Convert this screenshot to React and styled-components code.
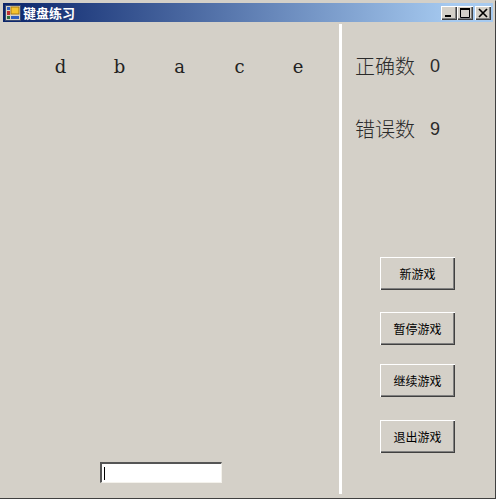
import React from "react";
import styled, { createGlobalStyle } from "styled-components";

const Global = createGlobalStyle`
  html, body { margin: 0; padding: 0; background: #d4d0c8; overflow: hidden; }
  #root { width: 496px; height: 499px; }
`;
const Window = styled.div`
  box-sizing: border-box; width: 496px; height: 499px; display: flex; flex-direction: column;
  background: #d4d0c8; padding: 3px 2px 2px 3px;
  border-right: 1px solid #404040; border-bottom: 1px solid #404040;
  border-top: 1px solid #d4d0c8;
  font-family: "Liberation Sans", "Noto Sans CJK SC", sans-serif;
`;
const TitleBar = styled.div`
  height: 19px; flex: none; display: flex; align-items: center; padding: 0 2px 0 2px;
  background: linear-gradient(to right, #0a246a, #a6caf0 92%); margin-top: -1px;
`;
const AppIcon = styled.svg`width: 16px; height: 16px; flex: none; margin-right: 2px;`;
const Title = styled.div`
  flex: 1; color: #fff; font-size: 13px; font-weight: 700; line-height: 18px;
  font-family: "Noto Sans CJK SC", sans-serif;
`;
const CapButton = styled.div`
  box-sizing: border-box; width: 16px; height: 14px; margin-left: ${p => p.$gap || 0}px;
  background: #d4d0c8; display: flex; align-items: center; justify-content: center;
  box-shadow: inset 1px 1px 0 #fff, inset -1px -1px 0 #404040, inset -2px -2px 0 #808080;
`;
const Glyph = styled.svg`width: 10px; height: 10px; display: block;`;
const Body = styled.div`flex: 1; display: flex; min-height: 0; padding-top: 2px;`;
const GameArea = styled.div`
  width: 336px; flex: none; display: flex; flex-direction: column; align-items: flex-start;
`;
const Letters = styled.div`
  display: grid; grid-template-columns: 59px 59px 61px 59px 58px; margin: 32px 0 0 28px;
`;
const Letter = styled.span`
  text-align: center; font: 18px/22px "DejaVu Serif", serif; color: #222;
`;
const InputBox = styled.div`
  box-sizing: border-box; width: 122px; height: 21px; margin: auto 0 13px 97px;
  background: #fff; padding: 3px 2px;
  border-top: 2px solid #555; border-left: 2px solid #555;
  border-right: 1px solid #f4f2ec; border-bottom: 1px solid #f4f2ec;
`;
const Caret = styled.div`width: 1px; height: 13px; background: #000;`;
const Divider = styled.div`width: 3px; flex: none; background: #fff; margin: 0 0 2px 0;`;
const Side = styled.div`flex: 1; display: flex; flex-direction: column; padding-left: 13px;`;
const Stat = styled.div`
  display: flex; align-items: center; height: 30px; margin-top: ${p => p.$top}px;
  font-size: 20px; color: #2a2a2a; font-family: "Noto Sans CJK SC", sans-serif; font-weight: 300;
`;
const StatLabel = styled.span`width: 75px; flex: none;`;
const StatValue = styled.span`font-family: "Liberation Sans", sans-serif; font-size: 18px; padding-top: 2px;`;
const GameButton = styled.button`
  box-sizing: border-box; width: 75px; height: 33px; padding: 0; border: 0; flex: none;
  margin: ${p => p.$top}px 0 0 25px; background: #d4d0c8; color: #000;
  font: 12px/16px "Noto Sans CJK SC", sans-serif;
  box-shadow: inset 1px 1px 0 #fff, inset -1px -1px 0 #404040, inset -2px -2px 0 #808080;
`;

export default function App() {
  return (
    <Window>
      <Global />
      <TitleBar>
        <AppIcon viewBox="0 0 16 16">
          <rect x="0.5" y="0.5" width="15" height="15" fill="#d8d4c8" stroke="#3a4a70" />
          <rect x="6" y="2" width="8" height="7" fill="#f4c430" stroke="#a87a10" />
          <rect x="2" y="2" width="3" height="3" fill="#3060c0" />
          <rect x="2" y="6" width="3" height="4" fill="#c03030" />
          <rect x="2" y="11" width="3" height="3" fill="#307040" />
          <rect x="6" y="11" width="8" height="3" fill="#3060c0" />
        </AppIcon>
        <Title>键盘练习</Title>
        <CapButton>
          <Glyph viewBox="0 0 10 10"><rect x="1" y="7" width="6" height="2" fill="#000" /></Glyph>
        </CapButton>
        <CapButton>
          <Glyph viewBox="0 0 10 10"><path d="M0.5 1.5h9v8h-9z" fill="none" stroke="#000" /><rect y="0" width="10" height="2" fill="#000" /></Glyph>
        </CapButton>
        <CapButton $gap={2}>
          <Glyph viewBox="0 0 10 10"><path d="M1 1l8 8M9 1l-8 8" stroke="#000" strokeWidth="1.7" /></Glyph>
        </CapButton>
      </TitleBar>
      <Body>
        <GameArea>
          <Letters>
            {["d", "b", "a", "c", "e"].map(l => <Letter key={l}>{l}</Letter>)}
          </Letters>
          <InputBox><Caret /></InputBox>
        </GameArea>
        <Divider />
        <Side>
          <Stat $top={26}><StatLabel>正确数</StatLabel><StatValue>0</StatValue></Stat>
          <Stat $top={33}><StatLabel>错误数</StatLabel><StatValue>9</StatValue></Stat>
          <GameButton $top={114}>新游戏</GameButton>
          <GameButton $top={22}>暂停游戏</GameButton>
          <GameButton $top={19}>继续游戏</GameButton>
          <GameButton $top={23}>退出游戏</GameButton>
        </Side>
      </Body>
    </Window>
  );
}
